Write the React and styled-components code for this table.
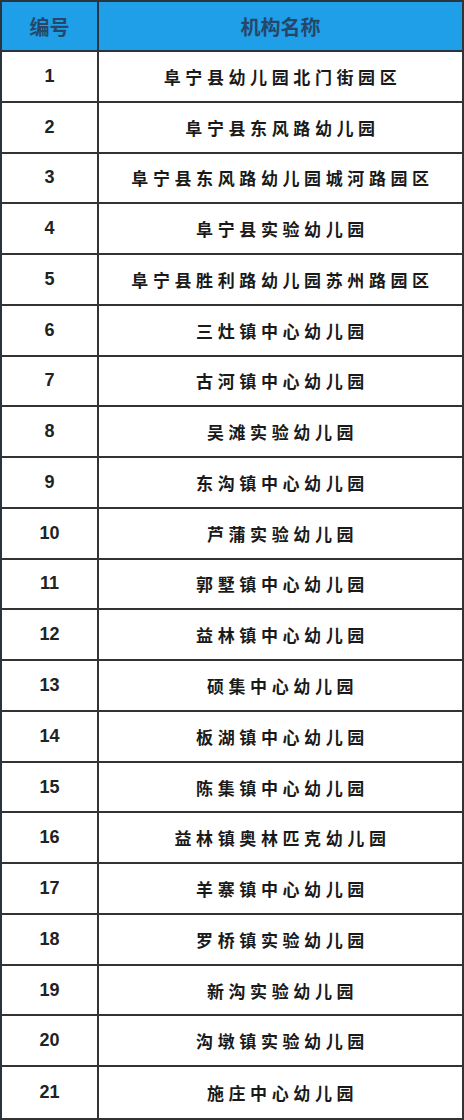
import React from "react";
import styled, { createGlobalStyle } from "styled-components";

const Global = createGlobalStyle`
  html, body { margin: 0; padding: 0; background: #fff; }
  body { font-family: "Noto Sans CJK SC", "Noto Sans", sans-serif; }
`;

const Table = styled.div`
  box-sizing: border-box;
  width: 464px;
  height: 1120px;
  display: grid;
  grid-template-columns: 97px 1fr;
  grid-template-rows: 50px repeat(21, 1fr);
  border-top: 2px solid #2a3440;
  border-left: 2px solid #2a3440;
  border-right: 2px solid #333;
  border-bottom: 2px solid #333;
  background: #fff;
`;

const Cell = styled.div`
  box-sizing: border-box;
  display: flex;
  align-items: center;
  justify-content: center;
  border-bottom: ${(p) => (p.$last ? "none" : "2px solid #333")};
  border-right: ${(p) => (p.$first ? "2px solid #333" : "none")};
  overflow: hidden;
  white-space: nowrap;
`;

const HeadCell = styled(Cell)`
  background: #1e9fe8;
  color: #27476a;
  font-family: "Noto Sans CJK SC", sans-serif;
  font-weight: 700;
  font-size: 20px;
  border-bottom: 2px solid #2a3440;
  border-right: ${(p) => (p.$first ? "2px solid #2a3440" : "none")};
`;

const NumCell = styled(Cell)`
  font-family: "Liberation Sans", Arial, sans-serif;
  font-weight: 700;
  font-size: 18px;
  color: #222;
`;

const NameCell = styled(Cell)`
  font-family: "Noto Sans CJK SC", serif;
  font-weight: 700;
  font-size: 17px;
  letter-spacing: 4.6px;
  padding-left: 4px;
  color: #1a1a1a;
`;

const names = [
  "阜宁县幼儿园北门街园区",
  "阜宁县东风路幼儿园",
  "阜宁县东风路幼儿园城河路园区",
  "阜宁县实验幼儿园",
  "阜宁县胜利路幼儿园苏州路园区",
  "三灶镇中心幼儿园",
  "古河镇中心幼儿园",
  "吴滩实验幼儿园",
  "东沟镇中心幼儿园",
  "芦蒲实验幼儿园",
  "郭墅镇中心幼儿园",
  "益林镇中心幼儿园",
  "硕集中心幼儿园",
  "板湖镇中心幼儿园",
  "陈集镇中心幼儿园",
  "益林镇奥林匹克幼儿园",
  "羊寨镇中心幼儿园",
  "罗桥镇实验幼儿园",
  "新沟实验幼儿园",
  "沟墩镇实验幼儿园",
  "施庄中心幼儿园",
];

export default function App() {
  return (
    <>
      <Global />
      <Table>
        <HeadCell $first>编号</HeadCell>
        <HeadCell>机构名称</HeadCell>
        {names.map((n, i) => {
          const last = i === names.length - 1;
          return (
            <React.Fragment key={i}>
              <NumCell $first $last={last}>{i + 1}</NumCell>
              <NameCell $last={last}>{n}</NameCell>
            </React.Fragment>
          );
        })}
      </Table>
    </>
  );
}
